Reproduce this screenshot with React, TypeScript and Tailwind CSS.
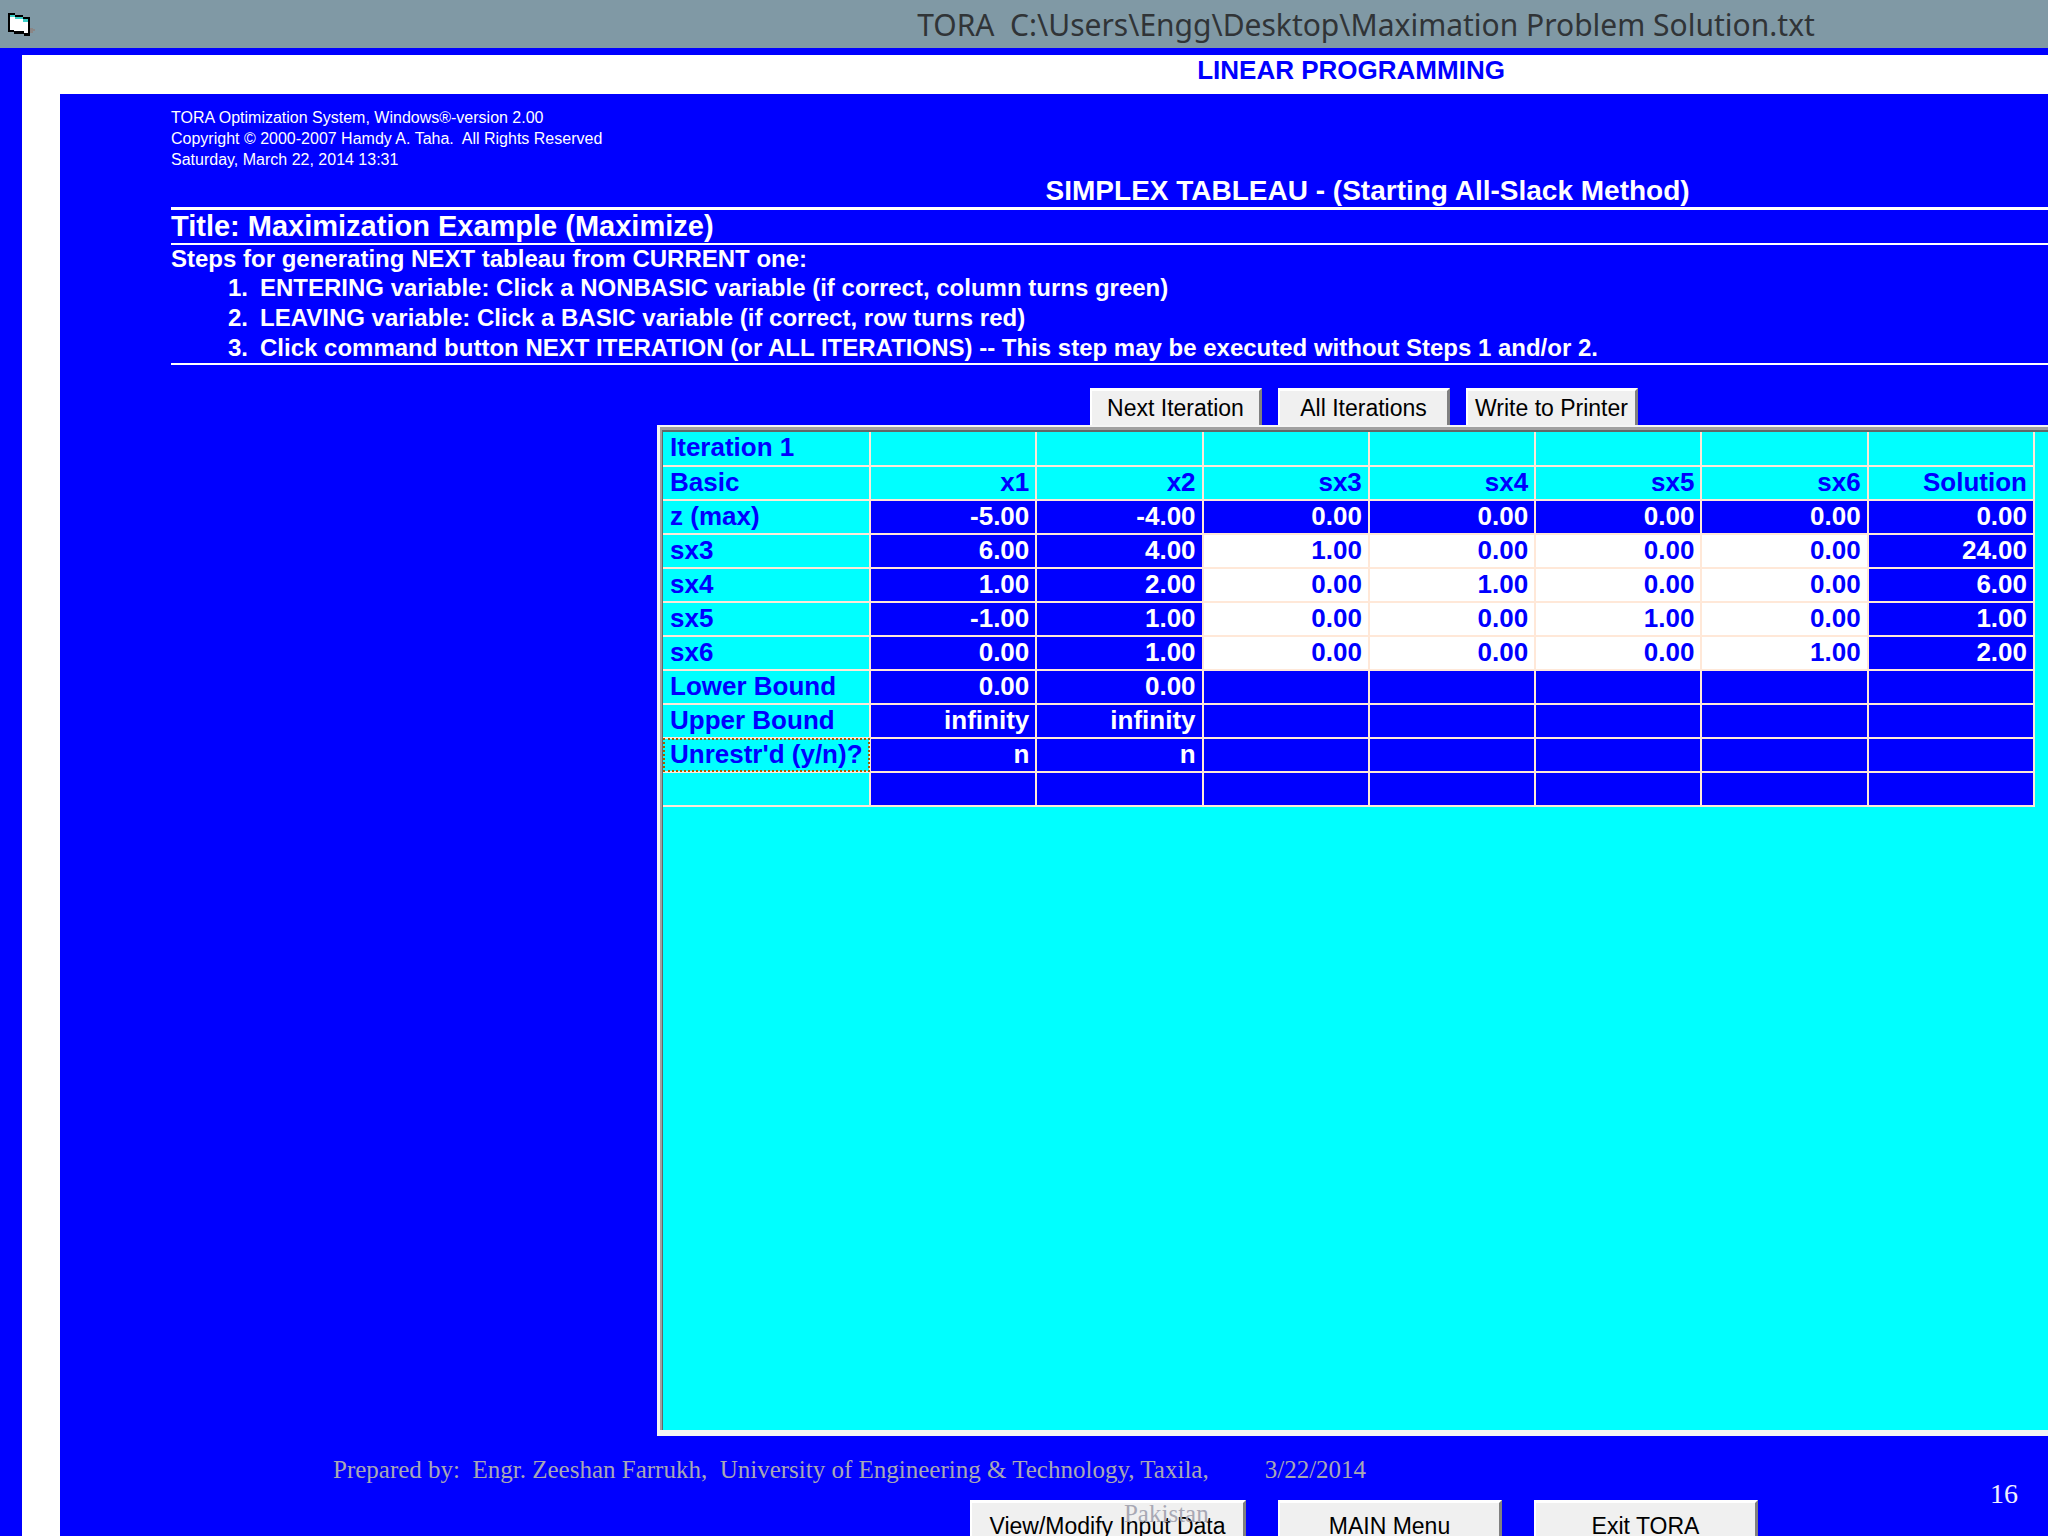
// App.tsx

import type { ReactNode } from "react";
import clsx from "clsx";

const columns = ["x1", "x2", "sx3", "sx4", "sx5", "sx6", "Solution"];

const rows = [
  { basic: "z (max)", values: ["-5.00", "-4.00", "0.00", "0.00", "0.00", "0.00", "0.00"] },
  { basic: "sx3", slack: true, values: ["6.00", "4.00", "1.00", "0.00", "0.00", "0.00", "24.00"] },
  { basic: "sx4", slack: true, values: ["1.00", "2.00", "0.00", "1.00", "0.00", "0.00", "6.00"] },
  { basic: "sx5", slack: true, values: ["-1.00", "1.00", "0.00", "0.00", "1.00", "0.00", "1.00"] },
  { basic: "sx6", slack: true, values: ["0.00", "1.00", "0.00", "0.00", "0.00", "1.00", "2.00"] },
  { basic: "Lower Bound", values: ["0.00", "0.00", "", "", "", "", ""] },
  { basic: "Upper Bound", values: ["infinity", "infinity", "", "", "", "", ""] },
  { basic: "Unrestr'd (y/n)?", focused: true, values: ["n", "n", "", "", "", "", ""] },
  { basic: "", values: ["", "", "", "", "", "", ""] },
];

const steps = [
  "ENTERING variable: Click a NONBASIC variable (if correct, column turns green)",
  "LEAVING variable: Click a BASIC variable (if correct, row turns red)",
  "Click command button NEXT ITERATION (or ALL ITERATIONS) -- This step may be executed without Steps 1 and/or 2.",
];

const FormIcon = () => (
  <svg width="28" height="24" viewBox="0 0 28 24" shapeRendering="crispEdges" aria-hidden="true">
    <path d="M22 15h3v1h2v2h-2v2h-3z" fill="#8a8686" />
    <path d="M0 0h7v2h8v2h7v19h-6v-2H6v-2H0z" fill="#000" />
    <path d="M2 4h5v2h8v3h5v11h-4v-2H6v-1H2z" fill="#fff" />
    <path d="M2 2h5v2H2zM7 4h8v2H7zM15 6h5v3h-5z" fill="#3cd0c8" />
  </svg>
);

const CommandButton = ({ className, children }: { className?: string; children: ReactNode }) => (
  <button
    type="button"
    className={clsx(
      "shrink-0 border-t-3 border-r-3 border-l-2 border-t-white border-r-[#808080] border-l-white bg-[#f0f0f0] text-[23px] leading-8 whitespace-nowrap text-black",
      className
    )}
  >
    {children}
  </button>
);

const Tableau = () => (
  <table className="w-full table-fixed border-collapse text-[26px] leading-[30px] font-bold whitespace-nowrap">
    <colgroup>
      <col className="w-[207px]" />
      {columns.map((name) => <col key={name} />)}
    </colgroup>
    <thead className="text-[#0000ff]">
      <tr className="h-[34px]">
        <th className="border-r-2 border-b-2 border-[#ffe8d8] p-0 pl-[7px] text-left align-top">Iteration 1</th>
        {columns.map((name) => <td key={name} className="border-r-2 border-b-2 border-[#ffe8d8] p-0" />)}
      </tr>
      <tr className="h-[34px]">
        <th className="border-r-2 border-b-2 border-[#ffe8d8] p-0 pl-[7px] text-left align-top">Basic</th>
        {columns.map((name) => (
          <th key={name} className="border-r-2 border-b-2 border-[#ffe8d8] p-0 pr-[6px] text-right align-top">{name}</th>
        ))}
      </tr>
    </thead>
    <tbody>
      {rows.map((row) => (
        <tr key={row.basic} className="h-[34px]">
          <th
            className={clsx(
              "border-r-2 border-b-2 border-[#ffe8d8] p-0 pl-[7px] text-left align-top text-[#0000ff]",
              row.focused && "outline-2 -outline-offset-2 outline-dotted outline-[#a06000]"
            )}
          >
            {row.basic}
          </th>
          {row.values.map((value, i) => (
            <td
              key={i}
              className={clsx(
                "border-r-2 border-b-2 border-[#ffe8d8] p-0 pr-[6px] text-right align-top",
                row.slack && i > 1 && i < 6 ? "bg-white text-[#0000ff]" : "bg-[#0000ff] text-white"
              )}
            >
              {value}
            </td>
          ))}
        </tr>
      ))}
    </tbody>
  </table>
);

export default function App() {
  return (
    <div className="relative flex h-screen flex-col overflow-hidden bg-[#0000ff] font-['Liberation_Sans',sans-serif]">
      {/* title bar */}
      <header className="relative h-12 shrink-0 bg-[#8099a5] pl-[33.4%] text-center">
        <div className="absolute top-[13px] left-2">
          <FormIcon />
        </div>
        <h1 className="font-['Noto_Sans',sans-serif] text-[30px] leading-[50px] whitespace-pre text-[#303437]">
          {"TORA  C:\\Users\\Engg\\Desktop\\Maximation Problem Solution.txt"}
        </h1>
      </header>

      <div className="mt-[7px] ml-[22px] flex min-h-0 flex-1 flex-col bg-white">
        <h2 className="h-[39px] shrink-0 pl-[31.2%] text-center text-[26px] leading-[30px] font-bold text-[#0000ff]">
          LINEAR PROGRAMMING
        </h2>

        <main className="ml-[38px] flex min-h-0 flex-1 flex-col bg-[#0000ff] text-white">
          <section className="ml-[111px] shrink-0 pt-[13px]">
            <div className="text-[16px] leading-[21px] whitespace-pre">
              <p>TORA Optimization System, Windows®-version 2.00</p>
              <p>{"Copyright © 2000-2007 Hamdy A. Taha.  All Rights Reserved"}</p>
              <p>Saturday, March 22, 2014 13:31</p>
            </div>
            <h3 className="mt-1 border-b-3 pl-[27.5%] text-center text-[28px] leading-[33px] font-bold">
              SIMPLEX TABLEAU - (Starting All-Slack Method)
            </h3>
            <h3 className="border-b-2 text-[29px] leading-[33px] font-bold">
              Title: Maximization Example (Maximize)
            </h3>
            <div className="border-b-2 text-[24px] leading-[30px] font-bold">
              <p className="leading-[28px]">Steps for generating NEXT tableau from CURRENT one:</p>
              <ol>
                {steps.map((step, i) => (
                  <li key={step} className="flex gap-3 pl-[57px] whitespace-nowrap">
                    <span>{i + 1}.</span>
                    <span>{step}</span>
                  </li>
                ))}
              </ol>
            </div>
          </section>

          <div className="mt-[23px] ml-[1030px] flex h-[37px] shrink-0 gap-4">
            <CommandButton className="w-[172px]">Next Iteration</CommandButton>
            <CommandButton className="w-[172px]">All Iterations</CommandButton>
            <CommandButton className="w-[172px]">Write to Printer</CommandButton>
          </div>

          <section className="ml-[597px] flex min-h-0 flex-1 border-t-2 border-b-6 border-l-3 border-[#f4f4f4]">
            <div className="flex-1 border-t-3 border-l-2 border-[#a0a0a0]">
              <div className="h-full border-t-2 border-l border-[#606868] bg-[#00ffff] pr-[13px]">
                <Tableau />
              </div>
            </div>
          </section>

          <div className="mt-16 ml-[910px] flex h-9 shrink-0 gap-8 overflow-hidden">
            <CommandButton className="h-12 w-[276px]">View/Modify Input Data</CommandButton>
            <CommandButton className="h-12 w-[224px]">MAIN Menu</CommandButton>
            <CommandButton className="h-12 w-[224px]">Exit TORA</CommandButton>
          </div>
        </main>
      </div>

      {/* slide footer lies over the window */}
      <footer className="absolute right-0 bottom-0 left-[333px] flex font-['Liberation_Serif',serif] text-[25px] leading-[44px] text-[#a8a8b4]">
        <p className="text-right whitespace-pre">
          {"Prepared by:  Engr. Zeeshan Farrukh,  University of Engineering & Technology, Taxila,"}
          <br />
          Pakistan
        </p>
        <p className="ml-14">3/22/2014</p>
        <p className="mt-6 mr-[30px] ml-auto text-[28px] text-[#f0f0ff]">16</p>
      </footer>
    </div>
  );
}
